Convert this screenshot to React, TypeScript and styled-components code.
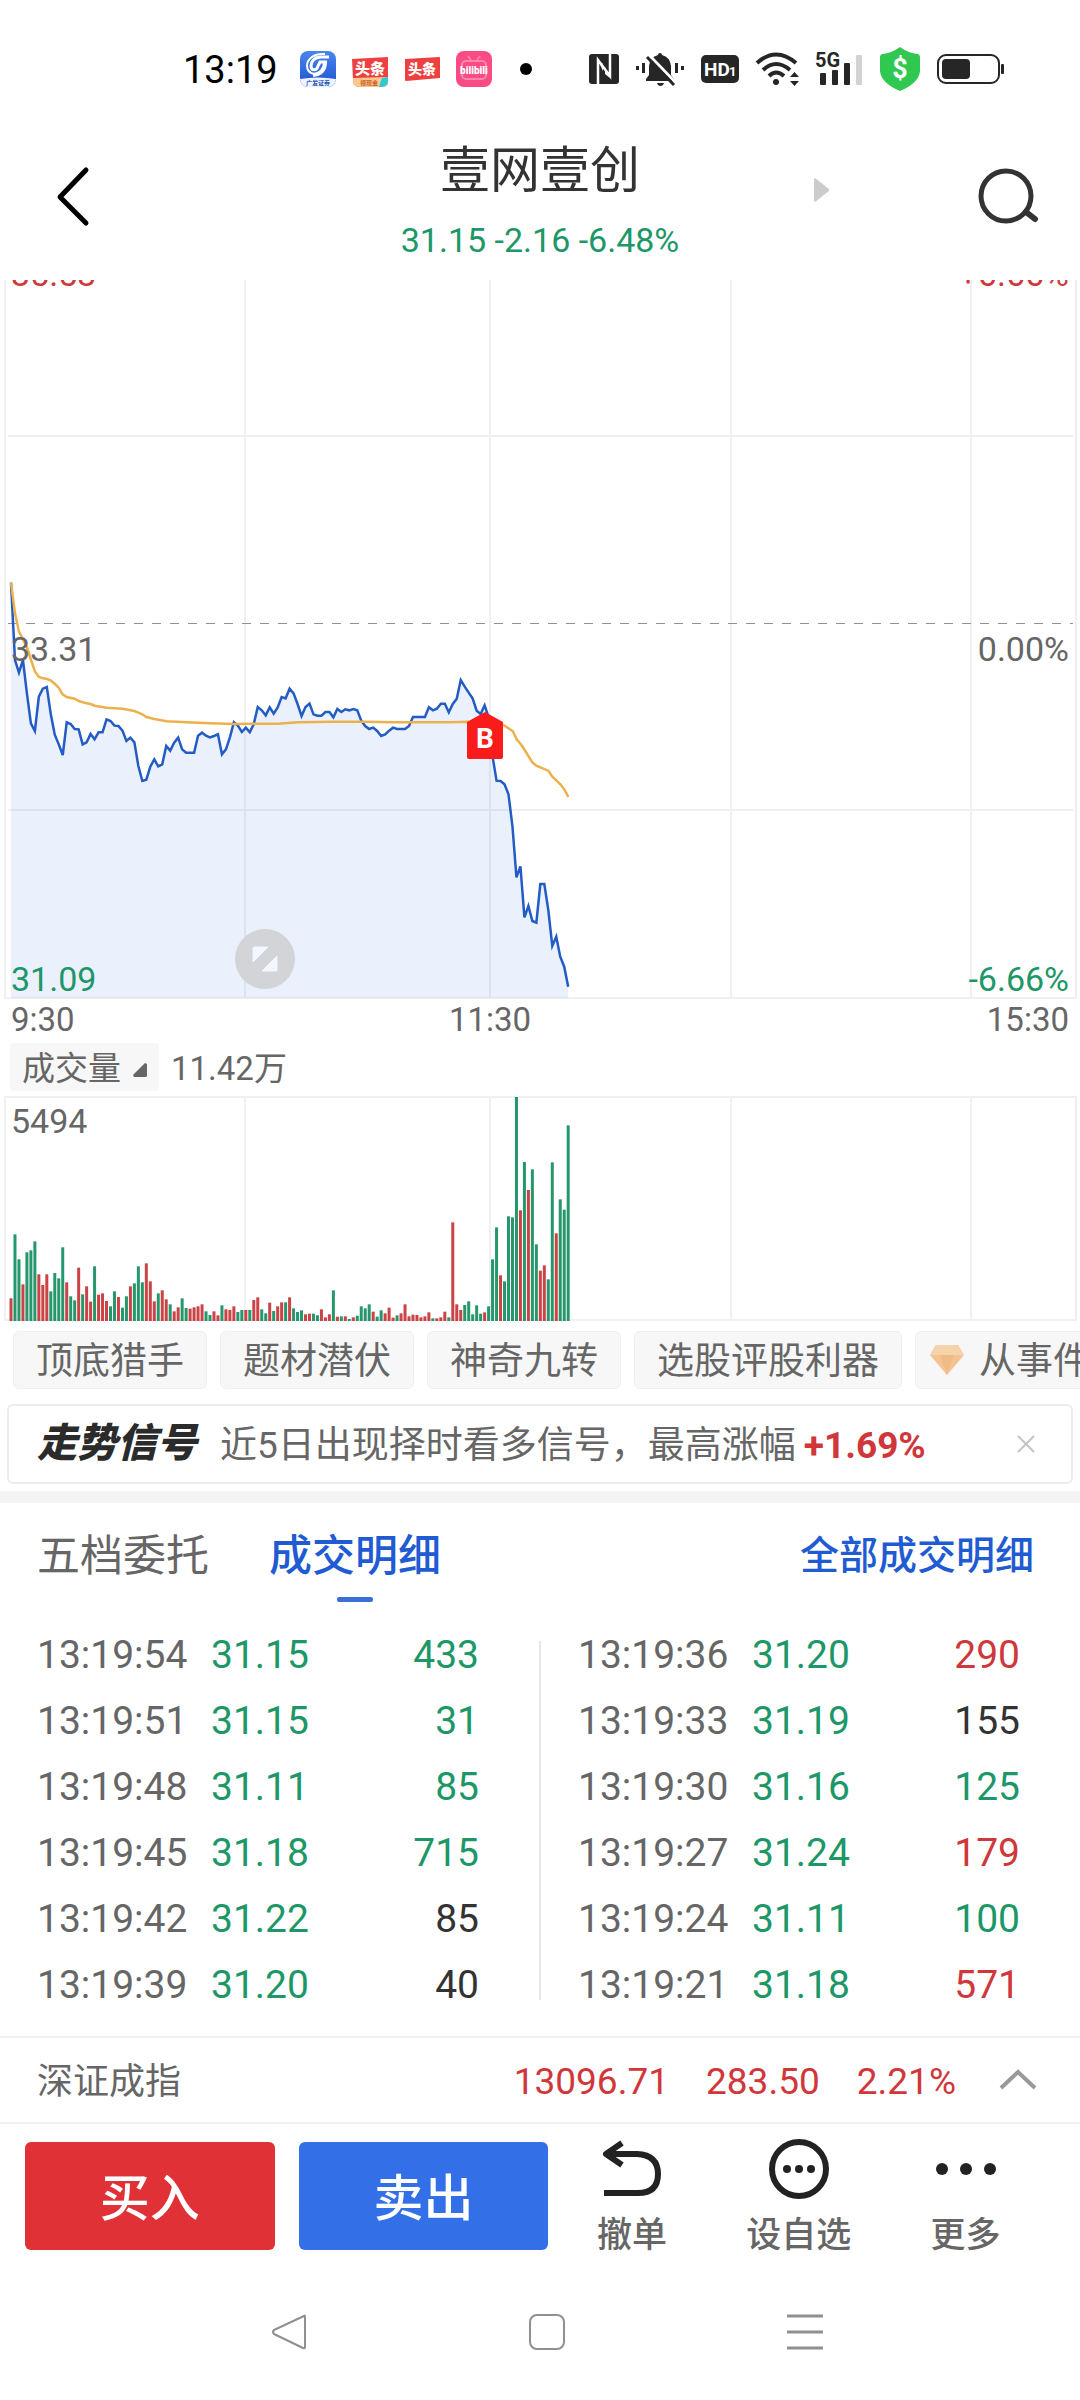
import React from "react";
import styled, { createGlobalStyle } from "styled-components";

const color = {
  up: "#d0373b",
  down: "#1d9768",
  ink: "#333333",
  text: "#666666",
  brand: "#1f5bd2",
  grid: "#f0f0f0",
};

type Tone = "up" | "down" | "ink";

const GlobalStyle = createGlobalStyle`
  * { box-sizing: border-box; }
  body {
    margin: 0;
    background: #fff;
    color: ${color.text};
    font-family: Roboto, "Noto Sans CJK SC", sans-serif;
    font-size: 33px;
    line-height: 40px;
  }
  svg { display: block; flex: none; overflow: visible; }
  button {
    margin: 0;
    padding: 0;
    border: 0;
    background: none;
    color: inherit;
    font: inherit;
    cursor: pointer;
  }
`;

const Page = styled.div`
  width: 100%;
  overflow: hidden;
`;

/* ---------- status bar ---------- */

const StatusBar = styled.div`
  display: flex;
  align-items: center;
  justify-content: space-between;
  height: 112px;
  padding: 26px 76px 0 183px;
`;

const StatusGroup = styled.div<{ $gap: number }>`
  display: flex;
  align-items: center;
  gap: ${(p) => p.$gap}px;
`;

const Clock = styled.time`
  margin-right: 6px;
  padding-top: 2px;
  color: #000;
  font-size: 38px;
`;

/* ---------- header ---------- */

const Header = styled.header`
  display: grid;
  grid-template-columns: 1fr auto 1fr;
  height: 168px;
`;

const HeaderLeft = styled.div`
  display: flex;
  align-items: center;
  padding-left: 54px;
`;

const HeaderRight = styled.div`
  display: flex;
  align-items: center;
  justify-content: space-between;
  padding: 0 40px 0 135px;
`;

const TitleBlock = styled.div`
  display: flex;
  flex-direction: column;
  align-items: center;
  gap: 19px;
  padding-top: 29px;
`;

const Title = styled.h1`
  margin: 0;
  color: ${color.ink};
  font-size: 50px;
  font-weight: 400;
  line-height: 60px;
`;

const Quote = styled.div`
  color: ${color.down};
  font-size: 34px;
`;

/* ---------- charts ---------- */

const ChartBox = styled.section`
  position: relative;
  overflow: hidden;

  > svg {
    width: 100%;
    height: auto;
  }
`;

const ChartLabel = styled.span<{ $top: number; $side: "left" | "right"; $color?: string }>`
  position: absolute;
  top: ${(p) => p.$top}px;
  ${(p) => p.$side}: 11px;
  color: ${(p) => p.$color ?? color.text};
  font-size: 34px;
`;

const TimeAxis = styled.div`
  display: grid;
  grid-template-columns: 1fr 1fr 1fr;
  height: 38px;
  padding: 0 11px;
`;

const AxisLabel = styled.span<{ $align: string }>`
  text-align: ${(p) => p.$align};
`;

const AxisMid = styled(AxisLabel)`
  padding-right: 100px;
`;

const VolumeHead = styled.div`
  display: flex;
  align-items: center;
  gap: 12px;
  padding: 5px 10px;
`;

const VolumeButton = styled.button`
  display: flex;
  align-items: center;
  gap: 12px;
  height: 48px;
  padding: 0 12px;
  border-radius: 4px;
  background: #f7f7f7;
`;

const VolumeText = styled.span`
  padding-top: 4px;
`;

/* ---------- chips and signal ---------- */

const Chips = styled.nav`
  display: flex;
  gap: 13px;
  padding: 9px 0 0 13px;
  overflow: hidden;
`;

const Chip = styled.button`
  display: flex;
  flex: none;
  align-items: center;
  gap: 15px;
  height: 58px;
  padding: 4px 22px 0;
  border: 1px solid #efefef;
  border-radius: 6px;
  background: #f7f7f7;
  font-size: 37px;
  white-space: nowrap;

  svg {
    margin-bottom: 4px;
  }
`;

const PremiumChip = styled(Chip)`
  padding-left: 14px;
`;

const Signal = styled.section`
  display: flex;
  align-items: center;
  height: 80px;
  margin: 15px 7px 7px;
  padding: 0 36px 0 28px;
  border: 2px solid #ececec;
  border-radius: 6px;
  font-size: 37px;
  white-space: nowrap;
`;

const SignalLogo = styled.strong`
  margin-right: 23px;
  color: #2b2b2b;
  font-size: 40px;
  font-style: italic;
  font-weight: 900;
`;

const SignalText = styled.p`
  flex: 1;
  margin: 0;
  padding-top: 4px;
`;

const SignalGain = styled.b`
  margin-left: 8px;
  color: ${color.up};
  font-weight: 700;
`;

const Band = styled.div`
  height: 12px;
  background: #f4f4f4;
`;

/* ---------- trades ---------- */

const Tabs = styled.div`
  display: flex;
  align-items: flex-start;
  gap: 60px;
  height: 118px;
  padding: 23px 46px 0 37px;
`;

const Tab = styled.button<{ $active?: boolean }>`
  display: flex;
  flex-direction: column;
  align-items: center;
  gap: 11px;
  color: ${(p) => (p.$active ? color.brand : color.text)};
  font-size: 43px;
  font-weight: ${(p) => (p.$active ? 500 : 400)};
  line-height: 60px;

  &::after {
    content: "";
    width: 36px;
    height: 5px;
    border-radius: 2px;
    background: ${(p) => (p.$active ? "#3b6fd8" : "transparent")};
  }
`;

const AllTrades = styled.a`
  margin-left: auto;
  color: ${color.brand};
  font-size: 39px;
  font-weight: 500;
  line-height: 60px;
  text-decoration: none;
`;

const Trades = styled.div`
  display: grid;
  grid-template-columns: 1fr 2px 1fr;
  padding-bottom: 19px;
`;

const Divider = styled.div`
  margin: 20px 0 17px;
  background: #e6e6e6;
`;

const TradeColumn = styled.div`
  padding: 0 60px 0 37px;
`;

const TradeTable = styled.table`
  width: 100%;
  border-collapse: collapse;
  table-layout: fixed;
  font-size: 39px;
`;

const TradeCell = styled.td<{ $tone?: Tone; $end?: boolean }>`
  height: 66px;
  padding: 2px 0 0;
  color: ${(p) => (p.$tone ? color[p.$tone] : color.text)};
  text-align: ${(p) => (p.$end ? "right" : "left")};
`;

const TimeCol = styled.col`
  width: 174px;
`;

/* ---------- index and actions ---------- */

const IndexRow = styled.section`
  display: flex;
  align-items: center;
  gap: 37px;
  height: 88px;
  padding: 0 42px 0 37px;
  border-top: 2px solid #f1f1f1;
  border-bottom: 2px solid #f1f1f1;
  font-size: 37px;
`;

const IndexName = styled.span`
  flex: 1;
  padding-top: 4px;
  font-size: 36px;
`;

const IndexValue = styled.span`
  padding-top: 4px;
  color: ${color.up};
`;

const ActionBar = styled.footer`
  display: grid;
  grid-template-columns: 524fr 501fr;
  padding: 18px 31px 0 25px;
`;

const TradeButtons = styled.div`
  display: grid;
  grid-template-columns: 1fr 1fr;
  gap: 24px;
`;

const TradeButton = styled.button<{ $bg: string }>`
  height: 108px;
  padding-top: 6px;
  border-radius: 6px;
  background: ${(p) => p.$bg};
  color: #fff;
  font-size: 50px;
  font-weight: 500;
`;

const Shortcuts = styled.div`
  display: grid;
  grid-template-columns: repeat(3, 1fr);
`;

const Shortcut = styled.button`
  display: flex;
  flex-direction: column;
  align-items: center;
  gap: 18px;
  height: 108px;
  font-size: 35px;
  font-weight: 500;
`;

const SystemNav = styled.nav`
  display: flex;
  align-items: center;
  justify-content: space-around;
  height: 132px;
  padding: 32px 146px 0 160px;
`;

/* ---------- data ---------- */

/* One sample a minute from 9:30, in thirds of a chart unit. */
const STEP = 3.98;
const START = 11;

const price = [
  68, 300, 338, 300, 400, 490, 513, 410, 386, 381, 463, 524, 553, 585, 487, 492, 507, 508, 553, 547,
  522, 538, 517, 517, 478, 483, 497, 498, 512, 543, 533, 547, 618, 663, 659, 620, 598, 619, 613, 558,
  572, 548, 533, 568, 578, 578, 578, 527, 518, 527, 532, 528, 523, 583, 568, 532, 487, 497, 516, 503,
  517, 492, 441, 451, 466, 442, 461, 442, 411, 415, 386, 400, 432, 468, 441, 431, 463, 467, 467, 456,
  456, 472, 447, 456, 448, 451, 447, 451, 482, 498, 507, 503, 513, 528, 523, 512, 503, 507, 507, 507,
  498, 471, 471, 471, 471, 442, 451, 446, 431, 431, 457, 432, 416, 360, 380, 398, 416, 452, 462, 436,
  472, 590, 662, 663, 673, 703, 800, 952, 919, 1072, 1038, 1083, 1088, 972, 972, 1050, 1158, 1130,
  1190, 1220, 1280,
];

const average: [number, number][] = [
  [33, 68], [45, 160], [57, 215], [66, 232], [81, 262], [93, 300], [105, 335], [117, 351], [129, 355],
  [141, 357], [153, 362], [165, 372], [176, 383], [188, 403], [200, 411], [224, 416], [236, 423],
  [260, 430], [272, 432], [284, 437], [320, 443], [368, 446], [403, 453], [415, 458], [427, 463],
  [439, 471], [463, 477], [500, 484], [560, 487], [630, 490], [700, 492], [835, 491], [893, 487],
  [1000, 485], [1090, 485], [1190, 487], [1350, 487], [1400, 485], [1455, 486], [1510, 495],
  [1538, 513], [1550, 538], [1562, 552], [1574, 570], [1585, 588], [1597, 607], [1609, 617],
  [1621, 622], [1645, 632], [1657, 650], [1669, 661], [1681, 673], [1693, 688], [1705, 711],
];

const volume =
  "r68 g260 g185 r110 g206 g212 g239 r140 r108 r140 g89 g144 g128 g221 r116 g74 g62 r160 g80 r104 " +
  "r58 g164 r79 r83 r60 g44 g89 r72 g40 g74 r104 g113 g164 g116 r173 r119 r59 g83 r92 r65 " +
  "g50 r29 r41 g68 g39 r37 r41 r44 r50 g29 g18 r29 r17 g47 r35 r33 r44 g27 g33 r33 " +
  "g33 r63 r71 g35 g23 r55 g30 r44 r56 g56 r71 g38 g27 g32 r20 r22 g22 g17 r35 r11 " +
  "r20 g92 r13 g14 r14 g6 r11 g16 g44 g38 g50 r28 g13 g32 r23 r40 r10 g17 r23 r50 " +
  "r14 r19 r18 r11 r14 r26 g8 r8 r11 r28 g11 r296 r50 r33 g48 g59 g20 g47 g22 r26 " +
  "g44 g185 g281 r137 g119 g314 g311 g672 r332 g477 r393 g455 g230 r151 r167 g125 g476 r263 g365 g334 " +
  "g587";

const verticals = [245, 490, 731, 971];

const trades: [string, string, string, Tone][][] = [
  [
    ["13:19:54", "31.15", "433", "down"],
    ["13:19:51", "31.15", "31", "down"],
    ["13:19:48", "31.11", "85", "down"],
    ["13:19:45", "31.18", "715", "down"],
    ["13:19:42", "31.22", "85", "ink"],
    ["13:19:39", "31.20", "40", "ink"],
  ],
  [
    ["13:19:36", "31.20", "290", "up"],
    ["13:19:33", "31.19", "155", "ink"],
    ["13:19:30", "31.16", "125", "down"],
    ["13:19:27", "31.24", "179", "up"],
    ["13:19:24", "31.11", "100", "down"],
    ["13:19:21", "31.18", "571", "up"],
  ],
];

/* ---------- drawings ---------- */

const cjk = '"Noto Sans CJK SC", sans-serif';

function AppIcons() {
  return (
    <>
      <svg width="36" height="36" viewBox="0 0 36 36">
        <defs>
          <linearGradient id="gf" x1="0" y1="0" x2="0" y2="1">
            <stop offset="0" stopColor="#4a86ee" />
            <stop offset="1" stopColor="#1d52cf" />
          </linearGradient>
          <clipPath id="gfClip"><rect width="36" height="36" rx="8" /></clipPath>
        </defs>
        <g clipPath="url(#gfClip)">
          <rect width="36" height="36" fill="url(#gf)" />
          <path d="M0 28 Q18 25 36 28 V36 H0Z" fill="#eef3fd" />
        </g>
        <path d="M25 3 C14 2 7 8 7 15 C7 19 10 22 14 23" fill="none" stroke="#fff" strokeWidth="2" />
        <path d="M29 6 H21 C14 6 11 11 11 15 C11 20 17 20 18 15 L20 11 H27" fill="none" stroke="#fff" strokeWidth="3" />
        <path d="M25 11 C25 18 22 23 13 24" fill="none" stroke="#fff" strokeWidth="4" />
        <text x="18" y="34" fontSize="6" fontWeight="700" textAnchor="middle" fill="#2b57bd" fontFamily={cjk}>广发证券</text>
      </svg>
      <svg width="36" height="36" viewBox="0 0 36 36">
        <path d="M0 8 L36 6 V30 Q36 36 30 36 H8 Q1 36 1 29Z" fill="#ee4040" />
        <path d="M1 27 L36 26 V30 Q36 36 30 36 H8 Q1 36 1 29Z" fill="#fbc98c" />
        <path d="M30 27 L36 26 V30 Q36 36 27 36Z" fill="#2cc8d6" />
        <text x="18" y="23" fontSize="15" fontWeight="900" textAnchor="middle" fill="#fff" fontFamily={cjk}>头条</text>
        <text x="17" y="34" fontSize="6" fontWeight="700" textAnchor="middle" fill="#c9622a" fontFamily={cjk}>领现金</text>
      </svg>
      <svg width="36" height="36" viewBox="0 0 36 36">
        <path d="M1 8 L35 6 Q36 6 36 7 V27 L2 30 Q1 30 1 29Z" fill="#ee4040" />
        <text x="18" y="23" fontSize="14" fontWeight="900" textAnchor="middle" fill="#fff" fontFamily={cjk}>头条</text>
      </svg>
      <svg width="36" height="36" viewBox="0 0 36 36">
        <rect width="36" height="36" rx="8" fill="#fb4b85" />
        <g fill="none" stroke="#ff86ad" strokeWidth="2">
          <rect x="6" y="10" width="24" height="18" rx="4" />
          <path d="M12 5 L15 9 M24 5 L21 9" />
        </g>
        <text x="18" y="23" fontSize="10" fontWeight="900" textAnchor="middle" fill="#fff" fontFamily="Roboto, sans-serif">bilibili</text>
      </svg>
    </>
  );
}

function SystemIcons() {
  const dark = "#262626";
  return (
    <>
      <svg width="30" height="30" viewBox="0 0 30 30">
        <rect width="30" height="30" rx="3" fill={dark} />
        <path d="M9 30 V6 L21 22 V0" fill="none" stroke="#fff" strokeWidth="2.500" />
        <path d="M9 6 L14 10 V17Z M21 24 L16 20 V13Z" fill="#fff" />
      </svg>
      <svg width="48" height="34" viewBox="0 0 48 34">
        <path d="M24 1 Q26 1 26 3 Q34 5 35 14 V23 L38 27 V29 H10 V27 L13 23 V14 Q14 5 22 3 Q22 1 24 1Z M21 31 H28 Q27 34 24.500 34 Q22 34 21 31Z" fill={dark} />
        <path d="M13 3 L41 32" stroke="#fff" strokeWidth="3" />
        <path d="M11 5 L38 33" stroke={dark} strokeWidth="3" />
        <path d="M1.500 14 V18 M7.500 11 V21 M40.500 11 V21 M46.500 14 V18" stroke={dark} strokeWidth="3" />
      </svg>
      <svg width="38" height="28" viewBox="0 0 38 28">
        <rect width="38" height="28" rx="5" fill={dark} />
        <text x="3" y="21" fontSize="19" fontWeight="700" fill="#fff" fontFamily="Roboto, sans-serif">HD</text>
        <text x="28" y="21" fontSize="13" fontWeight="700" fill="#fff" fontFamily="Roboto, sans-serif">1</text>
      </svg>
      <svg width="44" height="34" viewBox="0 0 44 34">
        <g fill="none" stroke={dark} strokeWidth="4">
          <path d="M1 11 Q20 -6 40 11" />
          <path d="M7 18 Q20 6 34 18" />
          <path d="M13 24 Q20 17 28 24" />
        </g>
        <circle cx="20" cy="30" r="3" fill={dark} />
        <path d="M34 25 L38.500 20 L43 25Z M34 29 H43 L38.500 34Z" fill={dark} />
      </svg>
      <svg width="46" height="34" viewBox="0 0 46 34">
        <text x="-2" y="15" fontSize="20" fontWeight="700" fill={dark} fontFamily="Roboto, sans-serif">5G</text>
        <rect x="3" y="21" width="6" height="12" rx="1" fill={dark} />
        <rect x="15" y="18" width="6" height="15" rx="1" fill={dark} />
        <rect x="27" y="11" width="6" height="22" rx="1" fill={dark} />
        <rect x="39" y="3" width="6" height="30" rx="1" fill="#d2d2d2" />
      </svg>
      <svg width="40" height="44" viewBox="0 0 40 44">
        <path d="M20 0 Q28 6 38 7 Q40 8 40 10 V24 Q39 36 20 44 Q1 36 0 24 V10 Q0 8 2 7 Q12 6 20 0Z" fill="#30c850" />
        <text x="20" y="31" fontSize="27" fontWeight="700" textAnchor="middle" fill="#fff" fontFamily="Roboto, sans-serif">$</text>
      </svg>
      <svg width="67" height="30" viewBox="0 0 67 30">
        <rect x="1" y="1" width="61" height="28" rx="8" fill="none" stroke={dark} strokeWidth="2" />
        <rect x="5" y="5" width="28" height="20" rx="4" fill={dark} />
        <rect x="64" y="10" width="3" height="10" rx="1" fill={dark} />
      </svg>
    </>
  );
}

function PriceChart() {
  const points = price.map((v, i) => `${START + i * STEP},${280 + v / 3}`);
  const lastX = START + (price.length - 1) * STEP;
  return (
    <svg viewBox="0 0 1080 720" role="img" aria-label="分时走势">
      <g fill="none" stroke={color.grid} strokeWidth="2">
        {verticals.map((x) => <path key={x} d={`M${x} 0 V718`} />)}
        <path d="M8 156 H1073 M8 530 H1073" />
        <path d="M5 0 V718 H1076 V0" />
      </g>
      <path d="M8 343.500 H1073" stroke="#929292" strokeWidth="1" strokeDasharray="9 9" />
      <polygon points={`${START},718 ${points.join(" ")} ${lastX},718`} fill="#3b6fee" fillOpacity="0.1" />
      <polyline points={points.join(" ")} fill="none" stroke="#235cc4" strokeWidth="2.500" />
      <polyline
        points={average.map(([x, y]) => `${x / 3},${280 + y / 3}`).join(" ")}
        fill="none"
        stroke="#ecb14c"
        strokeWidth="2.500"
      />
      <path d="M485 432 L503 442 V477 Q503 479 501 479 H469 Q467 479 467 477 V442Z" fill="#fa1b1b" />
      <text x="485" y="468" fontSize="28" fontWeight="700" textAnchor="middle" fill="#fff" fontFamily="Roboto, sans-serif">B</text>
      <circle cx="265" cy="679" r="30" fill="#d3d4d8" />
      <path d="M254 667 H268 L253 682 V668Z M277 676 V690 Q277 691 276 691 H262Z" fill="#f2f6ff" stroke="#f2f6ff" strokeLinejoin="round" />
    </svg>
  );
}

function VolumeChart() {
  return (
    <svg viewBox="0 0 1080 226" role="img" aria-label="成交量">
      <g fill="none" stroke={color.grid} strokeWidth="2">
        {verticals.map((x) => <path key={x} d={`M${x} 1 V224`} />)}
        <rect x="5" y="1" width="1071" height="223" />
      </g>
      {volume.split(" ").map((bar, i) => {
        const height = Number(bar.slice(1)) / 3;
        return (
          <rect
            key={i}
            x={START - 1.5 + i * STEP}
            y={225 - height}
            width="3"
            height={height}
            fill={bar[0] === "r" ? "#cc4345" : "#26976c"}
          />
        );
      })}
    </svg>
  );
}

export default function App() {
  return (
    <Page>
      <GlobalStyle />
      <StatusBar>
        <StatusGroup $gap={16}>
          <Clock>13:19</Clock>
          <AppIcons />
          <svg width="40" height="12" viewBox="0 0 40 12"><circle cx="18" cy="6" r="6" fill="#000" /></svg>
        </StatusGroup>
        <StatusGroup $gap={17}>
          <SystemIcons />
        </StatusGroup>
      </StatusBar>

      <Header>
        <HeaderLeft>
          <button aria-label="返回">
            <svg width="36" height="60" viewBox="0 0 36 60">
              <path d="M32 4 L6 31 L32 57" fill="none" stroke="#000" strokeWidth="5" strokeLinecap="round" strokeLinejoin="round" />
            </svg>
          </button>
        </HeaderLeft>
        <TitleBlock>
          <Title>壹网壹创</Title>
          <Quote>31.15 -2.16 -6.48%</Quote>
        </TitleBlock>
        <HeaderRight>
          <button aria-label="下一只">
            <svg width="16" height="38" viewBox="0 0 16 38"><path d="M0 2 L1 1 L15 12 V14 L1 25 L0 24Z" fill="#ccc" /></svg>
          </button>
          <button aria-label="搜索">
            <svg width="62" height="56" viewBox="0 0 62 56">
              <circle cx="28" cy="28" r="25" fill="none" stroke="#333" strokeWidth="5" />
              <path d="M48 44 L57 51" stroke="#333" strokeWidth="6" strokeLinecap="round" />
            </svg>
          </button>
        </HeaderRight>
      </Header>

      <ChartBox>
        <PriceChart />
        <ChartLabel $top={-26} $side="left" $color={color.up}>35.53</ChartLabel>
        <ChartLabel $top={-26} $side="right" $color={color.up}>+6.66%</ChartLabel>
        <ChartLabel $top={349} $side="left">33.31</ChartLabel>
        <ChartLabel $top={349} $side="right">0.00%</ChartLabel>
        <ChartLabel $top={679} $side="left" $color={color.down}>31.09</ChartLabel>
        <ChartLabel $top={679} $side="right" $color={color.down}>-6.66%</ChartLabel>
      </ChartBox>
      <TimeAxis>
        <AxisLabel $align="left">9:30</AxisLabel>
        <AxisMid $align="center">11:30</AxisMid>
        <AxisLabel $align="right">15:30</AxisLabel>
      </TimeAxis>
      <VolumeHead>
        <VolumeButton>
          <VolumeText>成交量</VolumeText>
          <svg width="14" height="8" viewBox="0 0 14 8"><path d="M12 0 L14 1 V13 L13 14 H1 L0 12Z" fill="#666" /></svg>
        </VolumeButton>
        <VolumeText>11.42万</VolumeText>
      </VolumeHead>
      <ChartBox>
        <VolumeChart />
        <ChartLabel $top={5} $side="left">5494</ChartLabel>
      </ChartBox>

      <Chips>
        <Chip>顶底猎手</Chip>
        <Chip>题材潜伏</Chip>
        <Chip>神奇九转</Chip>
        <Chip>选股评股利器</Chip>
        <PremiumChip>
          <svg width="34" height="30" viewBox="0 0 34 30">
            <path d="M6 0 H28 L34 10 L17 30 L0 10Z" fill="#f3c492" />
            <path d="M6 0 H28 L34 10 H0Z" fill="#f6d3ab" />
            <path d="M10 10 H24 L17 30Z" fill="#f0bc86" />
          </svg>
          从事件
        </PremiumChip>
      </Chips>

      <Signal>
        <SignalLogo>走势信号</SignalLogo>
        <SignalText>
          近5日出现择时看多信号，最高涨幅<SignalGain>+1.69%</SignalGain>
        </SignalText>
        <button aria-label="关闭">
          <svg width="18" height="18" viewBox="0 0 18 18"><path d="M1 1 L17 17 M17 1 L1 17" stroke="#c4c4c4" strokeWidth="2" /></svg>
        </button>
      </Signal>
      <Band />

      <Tabs>
        <Tab>五档委托</Tab>
        <Tab $active>成交明细</Tab>
        <AllTrades href="#all">全部成交明细</AllTrades>
      </Tabs>
      <Trades>
        {trades.map((rows, column) => (
          <React.Fragment key={column}>
            {column > 0 && <Divider />}
            <TradeColumn>
              <TradeTable>
                <colgroup><TimeCol /><col /><col /></colgroup>
                <tbody>
                  {rows.map(([time, value, count, tone]) => (
                    <tr key={time}>
                      <TradeCell>{time}</TradeCell>
                      <TradeCell $tone="down">{value}</TradeCell>
                      <TradeCell $tone={tone} $end>{count}</TradeCell>
                    </tr>
                  ))}
                </tbody>
              </TradeTable>
            </TradeColumn>
          </React.Fragment>
        ))}
      </Trades>

      <IndexRow>
        <IndexName>深证成指</IndexName>
        <IndexValue>13096.71</IndexValue>
        <IndexValue>283.50</IndexValue>
        <IndexValue>2.21%</IndexValue>
        <button aria-label="展开">
          <svg width="45" height="24" viewBox="0 0 45 24"><path d="M8 20 L25 4 L42 20" fill="none" stroke="#999" strokeWidth="4" /></svg>
        </button>
      </IndexRow>

      <ActionBar>
        <TradeButtons>
          <TradeButton $bg="#e03236">买入</TradeButton>
          <TradeButton $bg="#336fe6">卖出</TradeButton>
        </TradeButtons>
        <Shortcuts>
          <Shortcut>
            <svg width="60" height="56" viewBox="0 0 60 56">
              <path d="M20 1 L4 12 L20 23 M5 12 H35 Q56 13 56 32 Q56 51 36 51 H2" fill="none" stroke="#222" strokeWidth="6" strokeLinejoin="round" />
            </svg>
            撤单
          </Shortcut>
          <Shortcut>
            <svg width="60" height="56" viewBox="0 0 60 56">
              <circle cx="30" cy="27" r="27" fill="none" stroke="#222" strokeWidth="6" />
              <circle cx="18" cy="27" r="4" fill="#222" />
              <circle cx="30" cy="27" r="4" fill="#222" />
              <circle cx="42" cy="27" r="4" fill="#222" />
            </svg>
            设自选
          </Shortcut>
          <Shortcut>
            <svg width="60" height="56" viewBox="0 0 60 56">
              <circle cx="6" cy="27" r="6" fill="#222" />
              <circle cx="30" cy="27" r="6" fill="#222" />
              <circle cx="54" cy="27" r="6" fill="#222" />
            </svg>
            更多
          </Shortcut>
        </Shortcuts>
      </ActionBar>

      <SystemNav>
        <button aria-label="系统返回">
          <svg width="36" height="38" viewBox="0 0 36 38">
            <path d="M33 3 Q34 2 34 4 V34 Q34 36 32 35 L3 21 Q1 19 3 17Z" fill="none" stroke="#909090" strokeWidth="2" strokeLinejoin="round" />
          </svg>
        </button>
        <button aria-label="主屏幕">
          <svg width="36" height="38" viewBox="0 0 36 38">
            <rect x="1" y="2" width="34" height="34" rx="7" fill="none" stroke="#909090" strokeWidth="2" />
          </svg>
        </button>
        <button aria-label="最近任务">
          <svg width="36" height="38" viewBox="0 0 36 38"><path d="M0 3 H36 M0 19 H36 M0 35 H36" stroke="#909090" strokeWidth="3" /></svg>
        </button>
      </SystemNav>
    </Page>
  );
}
